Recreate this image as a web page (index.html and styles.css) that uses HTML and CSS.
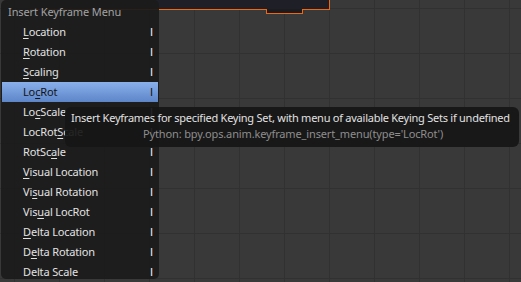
FILE: index.html
```html
<!DOCTYPE html>
<html lang="en">
<head>
  <meta charset="UTF-8">
  <meta name="viewport" content="width=device-width, initial-scale=1.0">
  <title>Insert Keyframe Menu</title>
  <link rel="stylesheet" href="styles.css">
</head>
<body>
  <div class="editor">
    <div class="header-strip">
      <div class="notch"></div>
    </div>

    <div class="menu">
      <div class="menu-title">Insert Keyframe Menu</div>
      <ul class="menu-items">
        <li><span><u>L</u>ocation</span><span class="key">I</span></li>
        <li><span><u>R</u>otation</span><span class="key">I</span></li>
        <li><span><u>S</u>caling</span><span class="key">I</span></li>
        <li class="active"><span>Lo<u>c</u>Rot</span><span class="key">I</span></li>
        <li><span>Lo<u>c</u>Scale</span><span class="key">I</span></li>
        <li><span>LocRot<u>S</u>cale</span><span class="key">I</span></li>
        <li><span>RotSc<u>a</u>le</span><span class="key">I</span></li>
        <li><span><u>V</u>isual Location</span><span class="key">I</span></li>
        <li><span>Vi<u>s</u>ual Rotation</span><span class="key">I</span></li>
        <li><span>Vis<u>u</u>al LocRot</span><span class="key">I</span></li>
        <li><span><u>D</u>elta Location</span><span class="key">I</span></li>
        <li><span>D<u>e</u>lta Rotation</span><span class="key">I</span></li>
        <li><span>Delta Scale</span><span class="key">I</span></li>
      </ul>
    </div>

    <div class="tooltip">
      <p class="tip-text">Insert Keyframes for specified Keying Set, with menu of available Keying Sets if undefined</p>
      <p class="tip-python">Python: bpy.ops.anim.keyframe_insert_menu(type='LocRot')</p>
    </div>
  </div>
</body>
</html>
```

FILE: styles.css
```css
body {
  margin: 0;
  padding: 0;
  font-family: "Noto Sans", "DejaVu Sans", sans-serif;
  font-size: 11px;
  background-color: #393939;
  overflow: hidden;
}
.editor {
  position: relative;
  width: 521px;
  height: 282px;
  background-color: #393939;
  background-image:
    linear-gradient(to right, #313131 1px, transparent 1px),
    linear-gradient(to bottom, #313131 1px, transparent 1px);
  background-size: 45px 45px;
  background-position: 14px 8px;
}
.header-strip {
  position: absolute;
  top: 0;
  left: 30px;
  width: 299px;
  height: 9px;
  background-color: #1f2027;
  border-right: 1px solid #f0690f;
  border-bottom: 1px solid #f0690f;
}
.notch {
  position: absolute;
  left: 236px;
  top: 9px;
  width: 35px;
  height: 4px;
  background-color: #1c1b20;
  border: 1px solid #f0690f;
  border-top: none;
}
.menu {
  position: absolute;
  top: 0;
  left: 1px;
  width: 156px;
  height: 279px;
  padding: 0 1px;
  background-color: rgba(27, 27, 27, 0.93);
  border-radius: 5px;
  overflow: hidden;
}
.menu-title {
  height: 21px;
  padding: 1px 0 0 6px;
  line-height: 21px;
  color: #a2a2a2;
  letter-spacing: -0.1px;
}
.menu-items {
  list-style: none;
  margin: 0;
  padding: 0;
}
.menu-items li {
  display: flex;
  justify-content: space-between;
  height: 20px;
  line-height: 20px;
  padding: 0 5px 0 21px;
  color: #e2e2e2;
  letter-spacing: -0.15px;
}
.menu-items u {
  text-decoration-thickness: 1px;
  text-underline-offset: 2px;
}
.menu-items li.active {
  background: linear-gradient(to bottom, #8ab0eb, #5d86c9);
  color: #141414;
}
.menu-items li.active .key {
  color: #141414;
}
.key {
  font-family: "Liberation Sans", sans-serif;
  color: #f0f0f0;
}
.tooltip {
  position: absolute;
  left: 65px;
  top: 107px;
  width: 442px;
  padding: 3px 6px 5px 6px;
  background-color: rgba(22, 22, 22, 0.92);
  border-radius: 6px;
}
.tooltip p {
  margin: 0;
  line-height: 16px;
  white-space: nowrap;
}
.tip-text {
  color: #e2e2e2;
  letter-spacing: -0.25px;
}
.tip-python {
  padding-left: 72px;
  color: #8e8e8e;
  letter-spacing: -0.14px;
}
```
